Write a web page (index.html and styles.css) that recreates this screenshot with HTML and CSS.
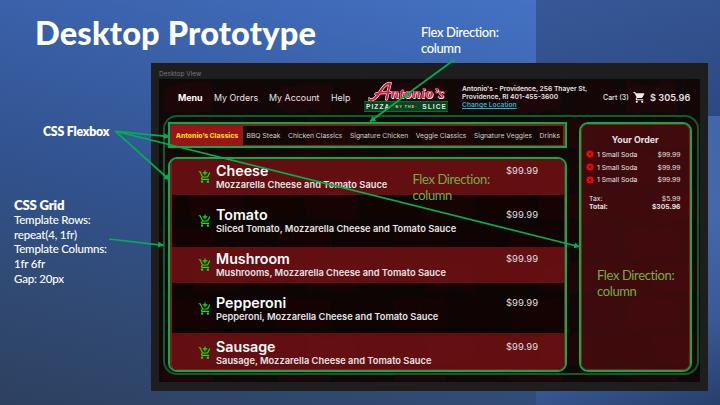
FILE: index.html
```html
<!DOCTYPE html>
<html lang="en">
<head>
<meta charset="utf-8">
<title>Desktop Prototype</title>
<link rel="stylesheet" href="styles.css">
</head>
<body>
<svg class="defs" width="0" height="0" aria-hidden="true">
  <symbol id="add-cart" viewBox="0 0 24 24"><path d="M11 9h2V6h3V4h-3V1h-2v3H8v2h3v3zm-4 9c-1.100 0-1.990.9-1.990 2S5.900 22 7 22s2-.9 2-2-.9-2-2-2zm10 0c-1.100 0-1.990.9-1.990 2s.89 2 1.990 2 2-.9 2-2-.9-2-2-2zm-9.830-3.250l.03-.12.900-1.630h7.450c.75 0 1.410-.41 1.750-1.030l3.860-7.010L19.420 4h-.01l-1.100 2-2.760 5H8.530l-.13-.27L6.160 6l-.95-2-.94-2H1v2h2l3.600 7.590-1.350 2.450c-.16.280-.25.610-.25.960 0 1.100.9 2 2 2h12v-2H7.420c-.13 0-.25-.11-.25-.25z"/></symbol>
  <symbol id="cart" viewBox="0 0 24 24"><path d="M7 18c-1.100 0-1.990.9-1.990 2S5.900 22 7 22s2-.9 2-2-.9-2-2-2zM1 2v2h2l3.600 7.590-1.350 2.450c-.16.280-.25.610-.25.960 0 1.100.9 2 2 2h12v-2H7.420c-.14 0-.25-.11-.25-.25l.03-.12.900-1.630h7.450c.75 0 1.410-.41 1.750-1.030l3.580-6.490A1 1 0 0 0 20 4H5.210l-.94-2H1zm16 16c-1.100 0-1.990.9-1.990 2s.89 2 1.990 2 2-.9 2-2-.9-2-2-2z"/></symbol>
  <symbol id="remove" viewBox="0 0 8 8"><circle cx="4" cy="4" r="3.600" fill="#f00508"/><path d="M2.700 2.700l2.600 2.600M5.300 2.700L2.700 5.300" stroke="#5a0808" stroke-width="1"/></symbol>
</svg>
<main class="slide">
  <h1 class="slide-title">Desktop Prototype</h1>

  <section class="frame">
    <div class="frame-name">Desktop View</div>
    <div class="app">
      <svg class="bricks" width="541" height="303" aria-hidden="true">
        <defs>
          <pattern id="brick" width="116" height="72" patternUnits="userSpaceOnUse">
            <rect x="3" y="4" width="52" height="29" rx="3" fill="#3c0e07"/>
            <rect x="61" y="3" width="51" height="30" rx="3" fill="#280b07"/>
            <rect x="-26" y="40" width="52" height="28" rx="3" fill="#260a06"/>
            <rect x="32" y="40" width="52" height="29" rx="3" fill="#400f07"/>
            <rect x="90" y="40" width="52" height="28" rx="3" fill="#260a06"/>
          </pattern>
          <filter id="rough" x="0" y="0" width="1" height="1"><feTurbulence type="fractalNoise" baseFrequency=".05" numOctaves="3" seed="4"/><feDisplacementMap in="SourceGraphic" scale="12"/><feGaussianBlur stdDeviation="1.500"/></filter>
        </defs>
        <rect width="541" height="303" fill="#181312"/>
        <rect width="541" height="303" fill="url(#brick)" filter="url(#rough)"/>
      </svg>
      <header class="topbar">
        <nav class="links"><b class="l1">Menu</b><span class="l2">My Orders</span><span class="l3">My Account</span><span>Help</span></nav>
        <div class="logo">
          <div class="logo-script"><svg width="26" height="20" viewBox="0 0 26 20"><path d="M1 17C4 20 9 15 12 10S19 1 22 1.500L18.500 17M8 12C12 9.500 17 11 22 10.500" fill="none" stroke="#fff" stroke-width="3.200" stroke-linecap="round"/><path d="M1 17C4 20 9 15 12 10S19 1 22 1.500L18.500 17M8 12C12 9.500 17 11 22 10.500" fill="none" stroke="#d8153a" stroke-width="2" stroke-linecap="round"/></svg><span>ntonio’s</span></div>
          <div class="logo-bar"><span>PIZZA</span><small>BY THE<i>•</i></small><span>SLICE</span></div>
        </div>
        <address class="address">Antonio's - Providence, 256 Thayer St,<br>Providence, RI 401-455-3600<br><a>Change Location</a></address>
        <div class="cart"><span>Cart (3)</span><svg><use href="#cart"/></svg><b>$ 305.96</b></div>
      </header>
      <div class="layout">
        <div class="main">
          <div class="tabs"><div class="tabs-inner"><b>Antonio’s Classics</b><span>BBQ Steak</span><span>Chicken Classics</span><span>Signature Chicken</span><span>Veggie Classics</span><span>Signature Veggies</span><span>Drinks</span></div></div>
          <div class="menu"><div class="menu-inner">
            <article class="item red"><svg><use href="#add-cart"/></svg><div class="info"><h2>Cheese</h2><p>Mozzarella Cheese and Tomato Sauce</p></div><span class="price">$99.99</span></article>
            <article class="item dark"><svg><use href="#add-cart"/></svg><div class="info"><h2>Tomato</h2><p>Sliced Tomato, Mozzarella Cheese and Tomato Sauce</p></div><span class="price">$99.99</span></article>
            <article class="item red"><svg><use href="#add-cart"/></svg><div class="info"><h2>Mushroom</h2><p>Mushrooms, Mozzarella Cheese and Tomato Sauce</p></div><span class="price">$99.99</span></article>
            <article class="item dark"><svg><use href="#add-cart"/></svg><div class="info"><h2>Pepperoni</h2><p>Pepperoni, Mozzarella Cheese and Tomato Sauce</p></div><span class="price">$99.99</span></article>
            <article class="item red last"><svg><use href="#add-cart"/></svg><div class="info"><h2>Sausage</h2><p>Sausage, Mozzarella Cheese and Tomato Sauce</p></div><span class="price">$99.99</span></article>
          </div></div>
        </div>
        <aside class="order"><div class="order-inner">
          <h3>Your Order</h3>
          <div class="line"><svg><use href="#remove"/></svg><span>1 Small Soda</span><span>$99.99</span></div>
          <div class="line"><svg><use href="#remove"/></svg><span>1 Small Soda</span><span>$99.99</span></div>
          <div class="line"><svg><use href="#remove"/></svg><span>1 Small Soda</span><span>$99.99</span></div>
          <div class="totals"><div><span>Tax:</span><span>$5.99</span></div><div class="total"><span>Total:</span><span>$305.96</span></div></div>
        </div></aside>
      </div>
    </div>
  </section>

  <p class="note note-top">Flex Direction:<br>column</p>
  <p class="note note-menu">Flex Direction:<br>column</p>
  <p class="note note-order">Flex Direction:<br>column</p>
  <p class="note note-flexbox">CSS Flexbox</p>
  <div class="note note-grid"><b>CSS Grid</b><p>Template Rows:<br>repeat(4, 1fr)<br>Template Columns:<br>1fr 6fr<br>Gap: 20px</p></div>

  <svg class="arrows" width="720" height="405" aria-hidden="true">
    <defs><marker id="head" viewBox="0 0 6 6" refX="5.500" refY="3" markerWidth="6" markerHeight="6" markerUnits="userSpaceOnUse" orient="auto"><path d="M0 0L6 3L0 6z" fill="#00b050"/></marker></defs>
    <g stroke="#00b050" stroke-width="1.700">
      <path d="M115.500 131.300L169.500 136.700" marker-end="url(#head)"/>
      <path d="M115.500 131.300L169.500 180" marker-end="url(#head)"/>
      <path d="M115.500 131.300L579.500 246.700" marker-end="url(#head)"/>
      <path d="M109 239L163.500 245.300" marker-end="url(#head)"/>
      <path d="M454.500 59.500L370 121.500" marker-end="url(#head)"/>
    </g>
  </svg>
</main>
</body>
</html>
```
FILE: styles.css
```css
* { box-sizing: border-box; }
body, h1, h2, h3, p { margin: 0; }
body { width: 720px; height: 405px; overflow: hidden; }
.defs { position: absolute; }

.slide {
  position: relative;
  width: 720px;
  height: 405px;
  overflow: hidden;
  padding: 14px 0 0 35px;
  background:
    linear-gradient(165deg, #375797 0%, #2b4a82 100%) 536px 0 / 184px 116px no-repeat,
    linear-gradient(160deg, #263f6c 0%, #36558f 0%, #4065a8 0%, #4468aa 45%, #3a5a96 75%, #263f6c 100%) 536px 116px / 184px 289px no-repeat,
    linear-gradient(195deg, #4472c4 0%, #3a60a8 28%, #31528e 55%, #314a73 78%, #2d4060 100%) 0 0 / 536px 405px no-repeat;
}
.slide-title {
  height: 49px;
  font: 900 32.600px/37px Lato, sans-serif;
  letter-spacing: .15px;
  color: #fff;
  white-space: nowrap;
}

.frame {
  width: 557px;
  height: 328px;
  margin-left: 116px;
  padding: 6px 8px 0;
  background: #1e1e1e;
  font-family: Inter, sans-serif;
  color: #e4e4e4;
}
.frame-name { height: 10px; font-size: 6.500px; line-height: 10px; color: #777; }
.app {
  position: relative;
  width: 541px;
  height: 303px;
  background: #080203;
  overflow: hidden;
}
.bricks { position: absolute; inset: 0; opacity: .4; }
.topbar, .layout { position: relative; }

.topbar { display: flex; align-items: center; height: 36px; padding-left: 19px; }
.links { display: flex; width: 186px; font-size: 8.900px; white-space: nowrap; }
.links .l1 { width: 36px; color: #fff; }
.links .l2 { width: 55px; }
.links .l3 { width: 62px; }

.logo { display: flex; flex-direction: column; flex: none; width: 84px; height: 29px; }
.logo-script { display: flex; height: 18px; padding-left: 4px; white-space: nowrap; }
.logo-script svg { flex: none; margin-top: -1px; }
.logo-script span {
  margin-left: -3px;
  font: italic bold 15px/17px "Liberation Serif", serif;
  letter-spacing: .5px;
  height: 17px;
  padding-top: 2px;
  color: #e0204a;
  text-shadow: .5px .5px 0 #fff, -.4px 0 0 #fff;
}
.logo-bar {
  display: flex;
  justify-content: space-between;
  align-items: center;
  height: 11px;
  padding: 0 1px 0 2px;
  border: 1px solid #14672f;
  border-width: 1px 0;
  background: #07451f;
  font: bold 6.500px/9px "Liberation Sans", sans-serif;
  letter-spacing: 1.100px;
}
.logo-bar small { font-size: 4px; letter-spacing: .8px; color: #d6c48f; }
.logo-bar i { color: #d42030; font-style: normal; }

.address { width: 139px; margin-left: 14px; font: 600 6.700px/8px Inter, sans-serif; white-space: nowrap; }
.address a { color: #2cb4cb; text-decoration: underline; }
.cart { display: flex; align-items: center; margin-left: 2px; font-size: 7px; font-weight: 500; white-space: nowrap; }
.cart span { width: 30px; }
.cart svg { width: 13px; height: 13px; fill: #eee; }
.cart b { margin-left: 4px; font-size: 9.200px; font-weight: 600; }

.layout {
  display: flex;
  gap: 12px;
  width: 536px;
  height: 260px;
  margin-left: 4px;
  padding: 5px 4px 2px;
  border: 2px solid #075f2b;
  border-radius: 14px;
}
.main { display: flex; flex-direction: column; gap: 9px; width: 399px; margin-left: -1px; }
.tabs { height: 26px; border: 2px solid #00b050; }
.tabs-inner {
  display: flex;
  align-items: center;
  gap: 7.500px;
  height: 22px;
  border: 1px solid #8f171b;
  border-width: 2px 2px 1px 0;
  font-size: 6.780px;
  white-space: nowrap;
  color: #d0d0d0;
}
.tabs b {
  display: flex;
  flex: none;
  align-items: center;
  justify-content: center;
  width: 73px;
  height: 20px;
  margin-right: -4px;
  padding-left: 1px;
  background: #981518;
  color: #ffd500;
  font-size: 6.800px;
  font-weight: 800;
}
.menu, .order { border: 2px solid #00b050; border-radius: 9px; }
.menu { height: 215px; }
.menu-inner {
  display: grid;
  grid-template-rows: 36px 52px 36px 50px 36px;
  height: 211px;
  border: solid #8f171b;
  border-width: 0 1px 1px 2px;
  border-radius: 7px;
  overflow: hidden;
}
.item { display: grid; grid-template-columns: 18px 290px 1fr; padding-left: 26px; }
.item.red { background: rgba(108, 17, 20, .9); }
.item.dark { padding-top: 8px; background: rgba(10, 0, 0, .35); }
.item.last { padding-top: 2px; }
.item svg { width: 14px; height: 14px; margin-top: 11px; fill: #0de80d; }
.item h2 { margin-top: 3px; font-size: 14.250px; font-weight: 600; line-height: 18px; color: #fff; }
.item p { font-size: 9.320px; font-weight: 600; line-height: 10px; white-space: nowrap; }
.price { padding-top: 5px; font-size: 9.500px; line-height: 14px; color: #ddd; }

.order { width: 113px; height: 250px; }
.order-inner {
  height: 246px;
  padding: 7px 8.500px 0 5px;
  border: 1px solid #8f171b;
  border-radius: 7px;
  background: rgba(83, 13, 16, .68);
  font-size: 6.800px;
}
.order h3 { margin-left: 3px; padding-bottom: 1px; font-size: 8.900px; font-weight: 700; line-height: 15px; text-align: center; }
.line { display: grid; grid-template-columns: 10px 1fr auto; align-items: center; height: 12.700px; }
.line svg { width: 8px; height: 8px; margin-left: -1px; }
.totals { margin-top: 9px; padding-left: 2px; line-height: 8px; }
.totals div { display: flex; justify-content: space-between; }
.totals .total { font-weight: 700; }

.note { position: absolute; font: 13px/16px Lato, sans-serif; color: #fff; white-space: nowrap; }
.note-top, .note-menu, .note-order { letter-spacing: -.38px; }
.note-top { left: 421px; top: 24px; font-weight: 500; }
.note-menu { left: 412.500px; top: 171px; color: #79aa48; }
.note-order { left: 597px; top: 267px; color: #79aa48; }
.note-flexbox { left: 43px; top: 124px; font-weight: 800; font-size: 12.300px; letter-spacing: -.2px; }
.note-grid { left: 14px; top: 197px; }
.note-grid b { font-size: 13.200px; font-weight: 800; letter-spacing: -.2px; }
.note-grid p { font-size: 11.500px; line-height: 14.700px; font-weight: 500; letter-spacing: -.2px; }
.arrows { position: absolute; inset: 0; fill: none; }
```
